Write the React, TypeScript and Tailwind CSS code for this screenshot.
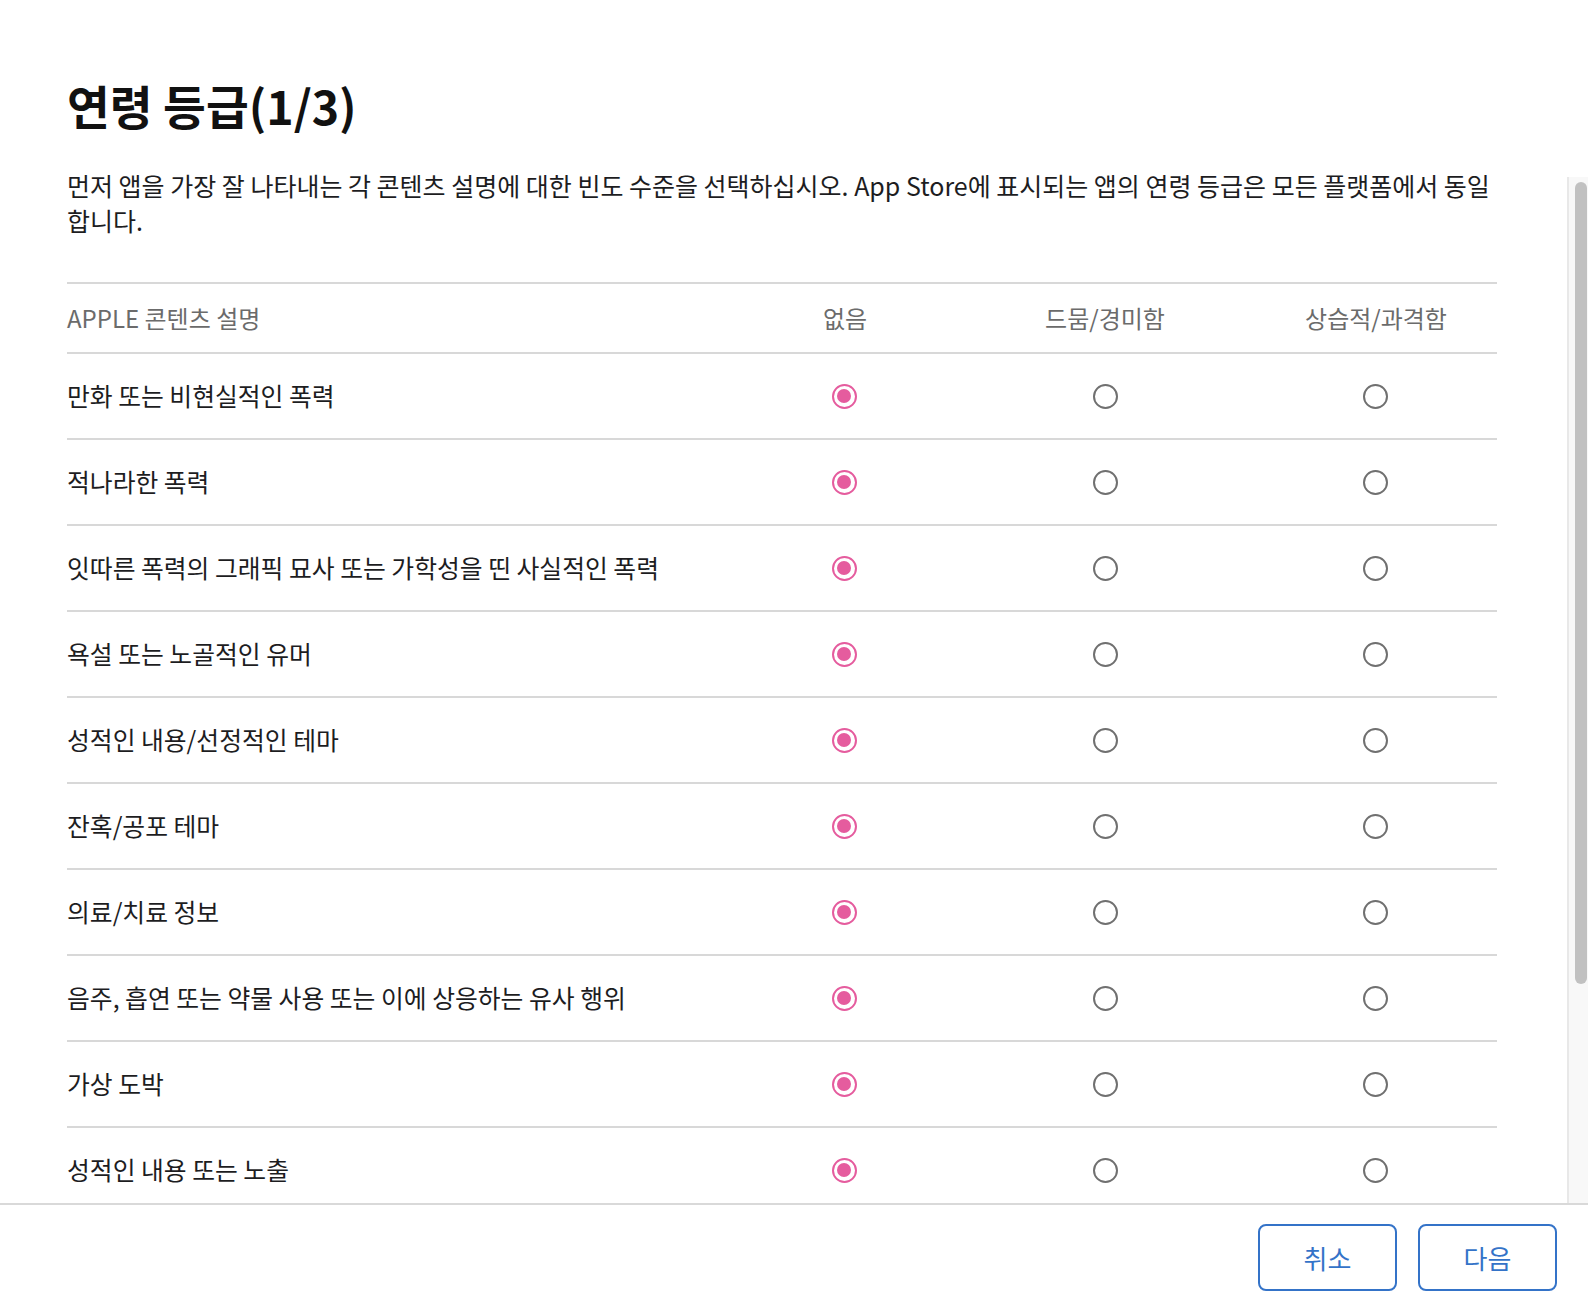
const rows = [
  "만화 또는 비현실적인 폭력",
  "적나라한 폭력",
  "잇따른 폭력의 그래픽 묘사 또는 가학성을 띤 사실적인 폭력",
  "욕설 또는 노골적인 유머",
  "성적인 내용/선정적인 테마",
  "잔혹/공포 테마",
  "의료/치료 정보",
  "음주, 흡연 또는 약물 사용 또는 이에 상응하는 유사 행위",
  "가상 도박",
  "성적인 내용 또는 노출",
];

function Radio({ checked }: { checked?: boolean }) {
  if (checked) {
    return (
      <span className="flex h-[25px] w-[25px] items-center justify-center rounded-full border-[2.5px] border-[#e55c9e]">
        <span className="h-[14px] w-[14px] rounded-full bg-[#e55c9e]" />
      </span>
    );
  }
  return <span className="block h-[25px] w-[25px] rounded-full border-2 border-[#707070]" />;
}

export default function App() {
  return (
    <div className="relative flex h-[1302px] w-full flex-col overflow-hidden bg-white font-['Noto_Sans_CJK_KR',sans-serif] text-[#1d1d1f]">
      <div className="flex-1 overflow-hidden pl-[67px] pr-[91px]">
        <h1 className="pt-[75px] text-[46.5px] font-bold leading-[60px] text-[#111]">연령 등급(1/3)</h1>
        <p className="mt-[33px] text-[25px] leading-[35px]">
          먼저 앱을 가장 잘 나타내는 각 콘텐츠 설명에 대한 빈도 수준을 선택하십시오. App Store에 표시되는 앱의 연령 등급은 모든 플랫폼에서 동일합니다.
        </p>

        <div className="mt-[44px] border-t-2 border-[#d8d8d8]">
          <div className="grid h-[70px] grid-cols-[648px_260px_260px_262px] items-center border-b-2 border-[#d8d8d8] text-[24px] text-[#6b6b6b]">
            <div>APPLE 콘텐츠 설명</div>
            <div className="text-center">없음</div>
            <div className="text-center">드뭄/경미함</div>
            <div className="pl-[20px] text-center">상습적/과격함</div>
          </div>
          {rows.map((label) => (
            <div
              key={label}
              className="grid h-[86px] grid-cols-[648px_260px_260px_262px] items-center border-b-2 border-[#d8d8d8] text-[24.8px]"
            >
              <div>{label}</div>
              <div className="flex justify-center pr-[2px]">
                <Radio checked />
              </div>
              <div className="flex justify-center">
                <Radio />
              </div>
              <div className="flex justify-center pl-[18px]">
                <Radio />
              </div>
            </div>
          ))}
        </div>
      </div>

      <footer className="flex h-[99px] shrink-0 items-start justify-end gap-[21px] border-t-2 border-[#d9d9d9] pr-[31px] pt-[19px]">
        <button className="h-[67px] w-[139px] rounded-[8px] border-2 border-[#3473c8] text-[26px] text-[#3473c8]">취소</button>
        <button className="h-[67px] w-[139px] rounded-[8px] border-2 border-[#3473c8] text-[26px] text-[#3473c8]">다음</button>
      </footer>

      {/* scrollbar */}
      <div className="absolute right-0 top-[177px] h-[1026px] w-[21px] border-l-2 border-[#e8e8e8] bg-[#f8f8f8]">
        <div className="absolute left-[6px] top-[5px] h-[802px] w-[12px] rounded-full bg-[#c1c1c1]" />
      </div>
    </div>
  );
}
